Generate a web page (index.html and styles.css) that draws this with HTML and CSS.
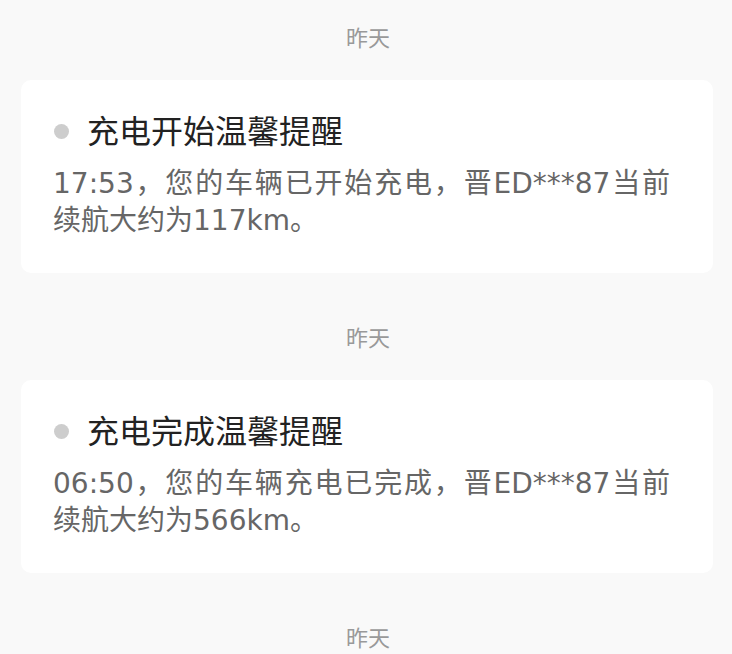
FILE: index.html
```html
<!DOCTYPE html>
<html lang="zh-CN">
<head>
<meta charset="utf-8">
<link rel="stylesheet" href="styles.css">
</head>
<body>
<div class="list">
  <section class="group">
    <div class="date">昨天</div>
    <div class="card">
      <div class="title"><span class="dot"></span><span>充电开始温馨提醒</span></div>
      <p class="body">17:53，您的车辆已开始充电，晋ED***87当前<span class="keep">续航大约为117km。</span></p>
    </div>
  </section>
  <section class="group">
    <div class="date">昨天</div>
    <div class="card">
      <div class="title"><span class="dot"></span><span>充电完成温馨提醒</span></div>
      <p class="body">06:50，您的车辆充电已完成，晋ED***87当前<span class="keep">续航大约为566km。</span></p>
    </div>
  </section>
  <section class="group">
    <div class="date">昨天</div>
  </section>
</div>
</body>
</html>
```
FILE: styles.css
```css
html, body {
  margin: 0;
  padding: 0;
  background: #f9f9f9;
}
body {
  font-family: "Noto Sans CJK SC", "Noto Sans", sans-serif;
  overflow: hidden;
  height: 654px;
}
.list {
  padding: 25px 19px 0 21px;
  display: flex;
  flex-direction: column;
  gap: 52px;
}
.group {
  display: flex;
  flex-direction: column;
  gap: 33px;
}
.date {
  text-align: center;
  font-size: 22px;
  line-height: 22px;
  color: #999;
  padding-left: 2px;
}
.card {
  background: #fff;
  border-radius: 10px;
  padding: 27px 43px 33px 32px;
  height: 193px;
  box-sizing: border-box;
}
.title {
  display: flex;
  align-items: center;
  height: 44px;
  font-size: 32px;
  color: #222;
}
.dot {
  width: 15px;
  height: 15px;
  border-radius: 50%;
  background: #cdcdcd;
  margin-left: 1px;
  margin-right: 18px;
  margin-top: 4px;
  flex: none;
}
.body {
  margin: 14px 0 0 0;
  font-family: "DejaVu Sans", "Noto Sans CJK SC", sans-serif;
  font-size: 28px;
  line-height: 37px;
  color: #666;
  text-align: justify;
}
.keep {
  white-space: nowrap;
}
```
